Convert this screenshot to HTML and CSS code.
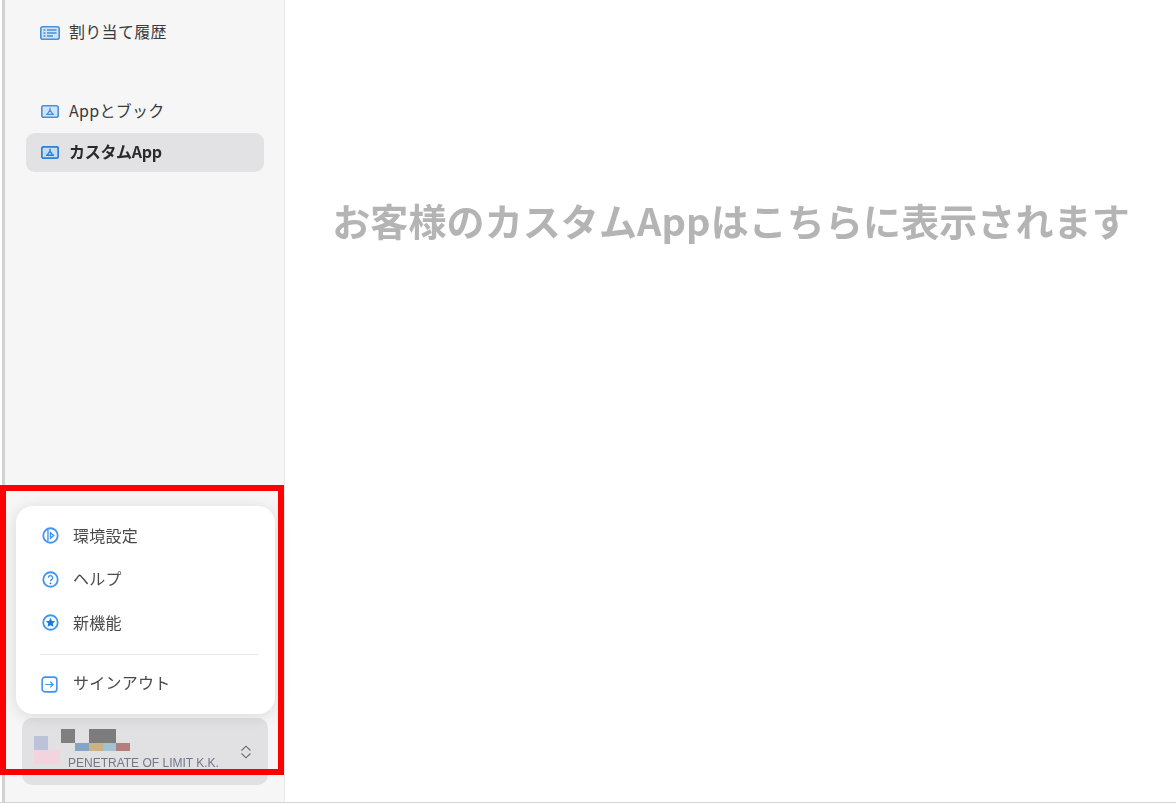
FILE: index.html
```html
<!DOCTYPE html>
<html lang="ja">
<head>
<meta charset="utf-8">
<title>カスタムApp</title>
<link rel="stylesheet" href="styles.css">
</head>
<body>
<div class="page">
  <aside class="sidebar">
    <nav class="nav">
      <a class="nav-item history">
        <svg class="icon-list" viewBox="0 0 20 14"><rect x=".8" y=".8" width="18.400" height="12.400" rx="2" class="box"/><path d="M3.500 4h2M3.500 7h2M3.500 10h2M7 4h9.500M7 7h9.500M7 10h6" class="ln"/></svg>
        <span>割り当て履歴</span>
      </a>
      <a class="nav-item">
        <svg class="icon-app" viewBox="0 0 18 13"><rect x=".8" y=".8" width="16.400" height="11.400" rx="1.800" class="box"/><path d="M9 2.800L9 5.200M9 5.200L6 9.500M9 5.200L12 9.500M5 9.300h8" class="ln"/></svg>
        <span>Appとブック</span>
      </a>
      <a class="nav-item active">
        <svg class="icon-app" viewBox="0 0 18 13"><rect x=".8" y=".8" width="16.400" height="11.400" rx="1.800" class="box strong"/><path d="M9 2.800L9 5.200M9 5.200L6 9.500M9 5.200L12 9.500M5 9.300h8" class="ln strong"/></svg>
        <span>カスタムApp</span>
      </a>
    </nav>
    <div class="bottom">
      <div class="popup">
        <a class="menu-item">
          <svg class="icon-menu" viewBox="0 0 16 16"><circle cx="8" cy="8" r="6.800" class="ring"/><path d="M5.600 2.500v11" class="ln-menu"/><path d="M8 5.500l3 2.500-3 2.500z" class="ln-menu"/></svg>
          <span>環境設定</span>
        </a>
        <a class="menu-item">
          <svg class="icon-menu" viewBox="0 0 16 16"><circle cx="8" cy="8" r="6.800" class="ring"/><path d="M6 6.300a2 2 0 1 1 3.200 1.600c-.8.600-1.200 1-1.200 1.800" class="ln-menu"/><circle cx="8" cy="11.700" r=".8" class="dot"/></svg>
          <span>ヘルプ</span>
        </a>
        <a class="menu-item">
          <svg class="icon-menu" viewBox="0 0 16 16"><circle cx="8" cy="8" r="6.800" class="ring"/><path d="M8 3.600l1.300 2.900 3.100.3-2.300 2.100.7 3.100L8 10.500l-2.800 1.500.7-3.100-2.300-2.100 3.100-.3z" class="dot"/></svg>
          <span>新機能</span>
        </a>
        <div class="divider"></div>
        <a class="menu-item">
          <svg class="icon-menu signout" viewBox="0 0 18 18"><rect x="1.200" y="1.200" width="15.600" height="15.600" rx="3" class="ring"/><path d="M4.500 9h8M9.800 6l3 3-3 3" class="ln-menu"/></svg>
          <span>サインアウト</span>
        </a>
      </div>
      <div class="account">
        <div class="mosaic">
          <i class="m m1"></i><i class="m m2"></i>
          <i class="m m3"></i><i class="m m4"></i><i class="m m5"></i><i class="m m6"></i>
          <i class="m m7"></i><i class="m m8"></i>
        </div>
        <span class="org">PENETRATE OF LIMIT K.K.</span>
        <svg class="updown" viewBox="0 0 12 14"><path d="M1.500 5.500L6 1.200l4.500 4.300M1.500 8.500L6 12.800l4.500-4.300"/></svg>
      </div>
    </div>
  </aside>
  <main class="main">
    <h1 class="empty">お客様のカスタムAppはこちらに表示されます</h1>
  </main>
</div>
<div class="highlight"></div>
</body>
</html>
```
FILE: styles.css
```css
html, body {
  margin: 0;
  height: 100%;
  background: #fff;
  overflow: hidden;
}
body {
  font-family: "Noto Sans CJK JP", "Noto Sans", sans-serif;
  color: #333;
}
.page {
  display: flex;
  height: 802px;
  border-bottom: 1px solid #d4d4d4;
  filter: blur(.35px);
}
.sidebar {
  width: 279px;
  margin-left: 2px;
  border-left: 3px solid #d2d2d2;
  border-right: 1px solid #e9e9e9;
  background: #f6f6f6;
  display: flex;
  flex-direction: column;
  justify-content: space-between;
}
.nav {
  display: flex;
  flex-direction: column;
  gap: 2px;
  padding: 13px 20px 0 21px;
}
.nav-item {
  display: flex;
  align-items: center;
  height: 39px;
  padding-left: 14px;
  border-radius: 9px;
  font-size: 16px;
  letter-spacing: .3px;
  color: #3a3a3c;
}
.nav-item span { margin-left: 9px; padding-bottom: 4px; }
.nav-item.history { margin-bottom: 38px; }
.nav-item.active {
  background: #e2e2e5;
  font-weight: 700;
  letter-spacing: -.3px;
  color: #2a2a2c;
}
.icon-list { width: 20px; height: 14px; flex: none; }
.icon-app { width: 18px; height: 13px; margin: -1px 1px 0; flex: none; }
.box { fill: #cfe2f6; stroke: #4a90d9; stroke-width: 1.600; }
.box.strong { fill: #c6dcf3; stroke: #2f7fd3; stroke-width: 1.800; }
.ln { fill: none; stroke: #4a90d9; stroke-width: 1.300; }
.ln.strong { stroke: #2f7fd3; stroke-width: 1.400; }
.bottom {
  display: flex;
  flex-direction: column;
  padding: 0 8px 17px 11px;
  gap: 4px;
}
.popup {
  width: 259px;
  height: 208px;
  box-sizing: border-box;
  padding: 8px 17px 0 24px;
  background: #fff;
  border-radius: 17px;
  box-shadow: 0 2px 16px rgba(0, 0, 0, .12);
  position: relative;
  z-index: 1;
}
.menu-item {
  display: flex;
  align-items: center;
  height: 43.500px;
  font-size: 16px;
  letter-spacing: .25px;
  color: #4a4a4c;
}
.menu-item span { margin-left: 14.500px; padding-bottom: 2px; }
.icon-menu { width: 17px; height: 17px; margin-left: 1.500px; flex: none; }
.signout { margin-left: 1px; margin-right: .5px; margin-top: 2px; }
.ring { fill: #fff; stroke: #3f95f2; stroke-width: 1.700; }
.ln-menu { fill: none; stroke: #3f95f2; stroke-width: 1.300; }
.dot { fill: #1278e6; }
.divider {
  height: 1px;
  margin: 9px 0 7px;
  background: #e8e8e8;
}
.account {
  position: relative;
  width: 246px;
  height: 67px;
  margin-left: 6px;
  border-radius: 10px;
  background: #e1e1e4;
  display: flex;
  align-items: center;
  justify-content: flex-end;
  padding-right: 16px;
  box-sizing: border-box;
}
.org {
  position: absolute;
  left: 46px;
  top: 37px;
  font-family: "Liberation Sans", Arial, sans-serif;
  font-size: 12px;
  line-height: 16px;
  color: #727789;
  white-space: nowrap;
}
.updown {
  width: 12px;
  height: 14px;
  fill: none;
  stroke: #6a6a6e;
  stroke-width: 1.100;
}
.mosaic {
  position: absolute;
  inset: 0;
}
.m { position: absolute; display: block; }
.m1 { left: 39px; top: 11px; width: 14px; height: 14px; background: #7f7f7f; }
.m2 { left: 67px; top: 11px; width: 27px; height: 14px; background: #7c7c7c; }
.m3 { left: 53px; top: 25px; width: 14px; height: 8px; background: #85a5c6; }
.m4 { left: 67px; top: 25px; width: 14px; height: 8px; background: #ccb182; }
.m5 { left: 81px; top: 25px; width: 13px; height: 8px; background: #a1c2d0; }
.m6 { left: 94px; top: 25px; width: 14px; height: 8px; background: #b27e7e; }
.m7 { left: 12px; top: 18px; width: 14px; height: 14px; background: #bcc2d8; }
.m8 { left: 12px; top: 32px; width: 26px; height: 14px; background: #f3d3dd; }
.main {
  flex: 1;
  display: flex;
  justify-content: center;
  align-items: flex-start;
}
.empty {
  margin: 192px 0 0 1px;
  font-size: 38px;
  line-height: 56px;
  font-weight: 700;
  letter-spacing: .1px;
  color: #b4b4b4;
  white-space: nowrap;
}
.highlight {
  position: absolute;
  left: 0;
  top: 485px;
  width: 284px;
  height: 290px;
  box-sizing: border-box;
  border: 6px solid #ff0000;
  z-index: 5;
}
```
